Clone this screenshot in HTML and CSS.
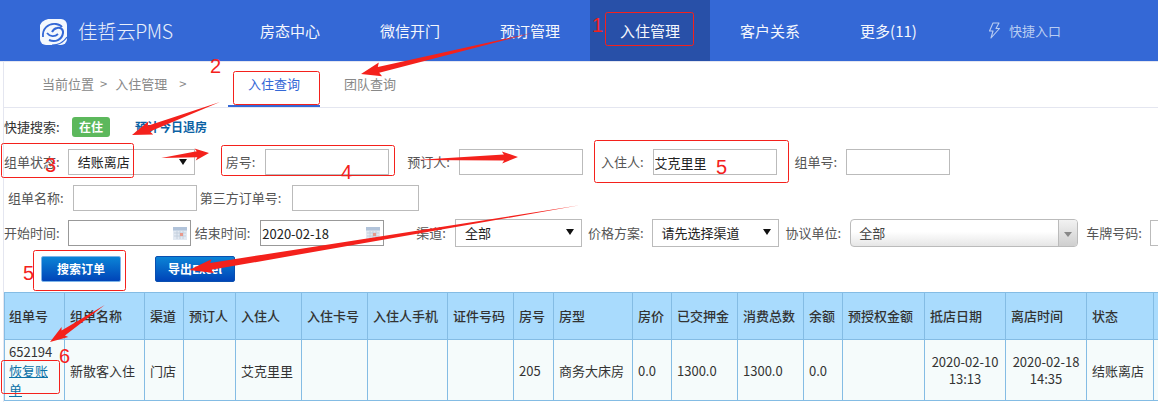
FILE: index.html
```html
<!DOCTYPE html>
<html lang="zh-CN">
<head>
<meta charset="utf-8">
<title>入住查询</title>
<link rel="stylesheet" href="styles.css">
</head>
<body>
<header class="topbar">
  <div class="brand">
    <svg class="logo" viewBox="0 0 27 26" width="27" height="26" aria-hidden="true">
      <rect x="0" y="0" width="27" height="26" rx="6" fill="#f4f8fe"/>
      <path d="M0 6C2 2 5 1 8 0H0z" fill="#3468d6"/>
      <path d="M3 18C2 10 8 4 16 5c3 .4 5 1.500 6 3" fill="none" stroke="#3468d6" stroke-width="1.800"/>
      <path d="M9 21c6 2.500 13 0 14-7 .5-4-3-6-6-5-3 .7-4 2-5 4" fill="none" stroke="#3468d6" stroke-width="2"/>
      <path d="M7 14c3 4 8 4 11 1" fill="none" stroke="#3468d6" stroke-width="1.800"/>
      <path d="M12 26c5 0 11-2 15-8" fill="none" stroke="#3468d6" stroke-width="1.200"/>
    </svg>
    <span class="brand-name">佳哲云PMS</span>
  </div>
  <nav class="nav">
    <a class="nav-item">房态中心</a>
    <a class="nav-item">微信开门</a>
    <a class="nav-item">预订管理</a>
    <a class="nav-item is-active">入住管理</a>
    <a class="nav-item">客户关系</a>
    <a class="nav-item">更多(11)</a>
    <a class="quick-entry">
      <svg viewBox="0 0 12 17" width="12" height="17" aria-hidden="true"><path d="M5 1h6L8 6.500h3.500L3 16l2-7H1.500z" fill="none" stroke="#b9cdf2" stroke-width="1.100" stroke-linejoin="round"/></svg>
      <span>快捷入口</span>
    </a>
  </nav>
</header>

<main class="content">
  <div class="crumbs">
    <span class="crumb-text">当前位置<span class="sep">&gt;</span>入住管理<span class="sep sep-last">&gt;</span></span>
    <div class="tabs">
      <a class="tab is-current">入住查询</a>
      <a class="tab">团队查询</a>
    </div>
  </div>

  <div class="quick">
    <span class="quick-label">快捷搜索:</span>
    <span class="badge">在住</span>
    <a class="quick-link">预计今日退房</a>
  </div>

  <div class="form-row row-one">
    <label class="field tight"><span class="lbl">组单状态:</span>
      <span class="select w-127"><span>结账离店</span></span></label>
    <label class="field gap-31"><span class="lbl">房号:</span><input class="txt w-124"></label>
    <label class="field snug gap-18"><span class="lbl">预订人:</span><input class="txt w-124"></label>
    <label class="field snug gap-18"><span class="lbl">入住人:</span><input class="txt w-124" value="艾克里里"></label>
    <label class="field snug gap-18"><span class="lbl">组单号:</span><input class="txt w-104"></label>
  </div>

  <div class="form-row row-two">
    <label class="field snug"><span class="lbl">组单名称:</span><input class="txt w-124"></label>
    <label class="field gap-3 wide"><span class="lbl">第三方订单号:</span><input class="txt w-127"></label>
  </div>

  <div class="form-row row-three">
    <label class="field tight"><span class="lbl">开始时间:</span>
      <span class="date w-123"><input class="date-input">
        <svg class="cal" viewBox="0 0 14 13" width="14" height="13" aria-hidden="true"><rect width="14" height="13" fill="#dfe7f1"/><rect width="14" height="3.500" fill="#a9bdd6"/><path d="M1 6h12M1 9h12M4 4v8M7 4v8M10 4v8" stroke="#b9c6d6" stroke-width=".8"/><rect x="7" y="6" width="3" height="3" fill="#e58f80"/></svg></span></label>
    <label class="field gap-4"><span class="lbl">结束时间:</span>
      <span class="date w-124"><input class="date-input" value="2020-02-18">
        <svg class="cal" viewBox="0 0 14 13" width="14" height="13" aria-hidden="true"><rect width="14" height="13" fill="#dfe7f1"/><rect width="14" height="3.500" fill="#a9bdd6"/><path d="M1 6h12M1 9h12M4 4v8M7 4v8M10 4v8" stroke="#b9c6d6" stroke-width=".8"/><rect x="7" y="6" width="3" height="3" fill="#e58f80"/></svg></span></label>
    <label class="field snug gap-32"><span class="lbl">渠道:</span><span class="select tall w-127"><span>全部</span></span></label>
    <label class="field tight gap-6"><span class="lbl">价格方案:</span><span class="select tall w-127"><span>请先选择渠道</span></span></label>
    <label class="field snug gap-7"><span class="lbl">协议单位:</span>
      <span class="combo"><span class="combo-text">全部</span><span class="combo-btn"></span></span></label>
    <label class="field tight gap-8"><span class="lbl">车牌号码:</span><input class="txt w-104"></label>
  </div>

  <div class="actions">
    <button class="btn btn-search" type="button">搜索订单</button>
    <button class="btn btn-export" type="button">导出Excel</button>
  </div>

  <table class="grid">
    <colgroup>
      <col class="c60"><col class="c80"><col class="c39"><col class="c52"><col class="c66"><col class="c66"><col class="c80"><col class="c66"><col class="c40"><col class="c79"><col class="c39"><col class="c66"><col class="c66"><col class="c39"><col class="c82"><col class="c81"><col class="c81"><col class="c67"><col class="c40">
    </colgroup>
    <thead>
      <tr><th>组单号</th><th>组单名称</th><th>渠道</th><th>预订人</th><th>入住人</th><th>入住卡号</th><th>入住人手机</th><th>证件号码</th><th>房号</th><th>房型</th><th>房价</th><th>已交押金</th><th>消费总数</th><th>余额</th><th>预授权金额</th><th>抵店日期</th><th>离店时间</th><th>状态</th><th></th></tr>
    </thead>
    <tbody>
      <tr>
        <td class="first">652194<br><a class="restore">恢复账单</a></td>
        <td>新散客入住</td><td>门店</td><td></td><td>艾克里里</td><td></td><td></td><td></td><td>205</td><td>商务大床房</td><td>0.0</td><td>1300.0</td><td>1300.0</td><td>0.0</td><td></td>
        <td class="center">2020-02-10<br>13:13</td><td class="center">2020-02-18<br>14:35</td><td>结账离店</td><td></td>
      </tr>
    </tbody>
  </table>
</main>

<svg class="marks" width="1158" height="402" viewBox="0 0 1158 402" aria-hidden="true">
  <g class="mark-boxes">
    <rect x="605.500" y="12.500" width="88" height="33" rx="2"/>
    <rect x="233.500" y="71.500" width="86" height="33" rx="2"/>
    <rect x="1.500" y="143.500" width="132" height="34" rx="2"/>
    <rect x="221.500" y="145.500" width="173" height="30" rx="2"/>
    <rect x="594.500" y="140.500" width="194" height="42" rx="2"/>
    <rect x="33.500" y="250.500" width="92" height="40" rx="2"/>
    <rect x="1.500" y="360.500" width="58" height="33" rx="2"/>
  </g>
  <g class="mark-arrows">
    <polygon transform="translate(361 74) rotate(166.500)" points="0,0 -20,-7 -18,-3 -180,0 -18,3 -20,7"/>
    <polygon transform="translate(132 135) rotate(159.400)" points="0,0 -20,-7 -18,-3 -94,0 -18,3 -20,7"/>
    <polygon transform="translate(209 153) rotate(-6)" points="0,0 -14,-6 -12,-3 -48,0 -12,3 -14,6"/>
    <polygon transform="translate(518 157) rotate(-1.700)" points="0,0 -16,-6 -14,-3 -102,0 -14,3 -16,6"/>
    <polygon transform="translate(189 270) rotate(170.600)" points="0,0 -24,-7 -22,-3.500 -396,0 -22,3.500 -24,7"/>
    <polygon transform="translate(50 342) rotate(146)" points="0,0 -18,-6 -16,-3 -66,0 -16,3 -18,6"/>
  </g>
  <g class="mark-nums">
    <text x="592" y="32">1</text>
    <text x="210" y="73">2</text>
    <text x="45" y="172">3</text>
    <text x="341" y="179">4</text>
    <text x="716" y="174">5</text>
    <text x="23" y="280">5</text>
    <text x="59" y="363">6</text>
  </g>
</svg>
</body>
</html>
```
FILE: styles.css
```css
* { box-sizing: border-box; }
html, body { margin: 0; padding: 0; width: 1158px; height: 402px; overflow: hidden; }
body {
  position: relative;
  background: #fff;
  color: #333;
  font: 13px/18px "Noto Sans CJK SC", "Liberation Sans", sans-serif;
}

/* top bar */
.topbar {
  display: flex;
  align-items: center;
  height: 62px;
  background: #3468d6;
  border-bottom: 1px solid #e4e6f0;
}
.brand { display: flex; align-items: center; width: 230px; padding-left: 40px; }
.logo { flex: none; margin-top: 2px; }
.brand-name { margin-left: 11px; color: #e8effb; font-size: 19.500px; font-weight: 300; letter-spacing: -.4px; white-space: nowrap; }
.nav { display: flex; align-items: stretch; height: 61px; }
.nav-item {
  display: flex;
  align-items: center;
  padding: 0 30px;
  color: #f4f7fd;
  font-size: 15px;
  white-space: nowrap;
}
.nav-item.is-active { background: #2850a8; }
.quick-entry { display: flex; align-items: center; gap: 7px; margin-left: 41px; color: #b9cdf2; font-size: 13px; }
.quick-entry span { margin-left: 2px; }

/* page body */
.content { width: 1155px; height: 340px; margin-left: 3px; border-left: 1px solid #e4e6f0; overflow: hidden; }
.crumbs { display: flex; height: 46px; border-bottom: 1px solid #e4e6f0; padding-left: 38px; }
.crumb-text { width: 186px; padding-top: 13px; color: #888; white-space: nowrap; }
.sep { margin: 0 8px 0 6px; }
.sep-last { margin: 0 0 0 12px; }
.tabs { display: flex; }
.tab { height: 45px; padding: 13px 0 0 20px; width: 92px; color: #888; }
.tab.is-current { color: #3468d6; border-bottom: 2px solid #3468d6; }
.tab + .tab { margin-left: 4px; }

.quick { display: flex; align-items: center; height: 20px; margin-top: 9px; }
.quick-label { width: 68px; color: #333; }
.badge {
  width: 38px; height: 20px;
  background: #5cb85c;
  border-radius: 3px;
  color: #fff;
  font-size: 12px;
  font-weight: 700;
  line-height: 20px;
  text-align: center;
}
.quick-link { margin-left: 25px; color: #0b62a4; font-size: 12px; font-weight: 700; }

/* filter form */
.form-row { display: flex; align-items: center; white-space: nowrap; }
.row-one { height: 26px; margin-top: 12px; }
.row-two { height: 26px; margin-top: 10px; padding-left: 4px; }
.row-three { height: 28px; margin-top: 8px; }
.field { display: flex; align-items: center; gap: 10px; flex: none; }
.field.tight { gap: 8px; }
.field.snug { gap: 9px; }
.field.wide { gap: 11px; }
.lbl { color: #555; }
.gap-3 { margin-left: 3px; }
.gap-4 { margin-left: 4px; }
.gap-6 { margin-left: 6px; }
.gap-7 { margin-left: 7px; }
.gap-8 { margin-left: 8px; }
.gap-18 { margin-left: 18px; }
.gap-31 { margin-left: 31px; }
.gap-32 { margin-left: 32px; }
.w-104 { width: 104px; }
.w-123 { width: 123px; }
.w-124 { width: 124px; }
.w-127 { width: 127px; }
.txt {
  height: 26px;
  padding: 0 1px;
  border: 1px solid #bbb;
  background: #fff;
  color: #222;
  font: inherit;
  outline: 0;
}
.select {
  position: relative;
  display: flex;
  align-items: center;
  height: 26px;
  padding-left: 9px;
  border: 1px solid #bbb;
  color: #222;
}
.select.tall { height: 28px; }
.select::after {
  content: "";
  position: absolute;
  right: 7px;
  top: 9px;
  border: 4px solid transparent;
  border-top: 6px solid #111;
  border-bottom: 0;
}
.date {
  display: flex;
  align-items: center;
  height: 26px;
  border: 1px solid #999;
  background: #fff;
}
.date-input { flex: 1; min-width: 0; height: 24px; padding: 0 0 0 1px; border: 0; color: #222; font: inherit; outline: 0; }
.cal { flex: none; margin: 0 3px 0 0; opacity: .9; }
.combo {
  display: flex;
  width: 228px;
  height: 28px;
  border: 1px solid #bbb;
  border-radius: 4px;
  background: linear-gradient(#fff 45%, #e6e6e6);
  overflow: hidden;
}
.combo-text { flex: 1; padding-left: 8px; line-height: 26px; color: #444; }
.combo-btn {
  position: relative;
  width: 19px;
  border-left: 1px solid #bbb;
  background: linear-gradient(#f2f2f2, #cfcfcf);
}
.combo-btn::after {
  content: "";
  position: absolute;
  left: 5px;
  top: 12px;
  border: 4px solid transparent;
  border-top: 5px solid #888;
  border-bottom: 0;
}

.actions { display: flex; height: 26px; margin-top: 9px; padding-left: 37px; gap: 34px; }
.btn {
  width: 80px;
  height: 26px;
  padding: 0;
  border: 1px solid #0a4fb0;
  border-radius: 2px;
  background: linear-gradient(#0b84d6, #0044b8);
  color: #fff;
  font: inherit;
  font-size: 12px;
  font-weight: 700;
}
.btn-search { border-color: #7db4e8; }

/* result table */
.grid {
  width: 1189px;
  margin: 10px 0 0 0;
  table-layout: fixed;
  border-collapse: collapse;
  color: #333;
}
.grid th, .grid td { padding: 0 5px; border: 1px solid #84bce4; text-align: left; white-space: normal; overflow: hidden; }
.grid th { height: 47px; background: #a9dbfd; font-weight: 500; white-space: nowrap; }
.grid td { height: 61px; background: #f5fbfb; line-height: 17px; }
.grid th:first-child, .grid td:first-child { padding-left: 4px; }
.grid td.center { text-align: center; }
.grid td.first { line-height: 19px; padding-top: 1px; }
.restore { color: #0b72a8; text-decoration: underline; }
.c39 { width: 39px; }
.c40 { width: 40px; }
.c52 { width: 52px; }
.c60 { width: 60px; }
.c66 { width: 66px; }
.c67 { width: 67px; }
.c79 { width: 79px; }
.c80 { width: 80px; }
.c81 { width: 81px; }
.c82 { width: 82px; }

/* red annotations drawn over the screenshot */
.marks { position: absolute; left: 0; top: 0; pointer-events: none; }
.mark-boxes rect { fill: none; stroke: #f4211c; stroke-width: 1; }
.mark-arrows polygon { fill: #f4211c; }
.mark-nums text { fill: #f4211c; font: 20px "Liberation Sans", sans-serif; }
```
